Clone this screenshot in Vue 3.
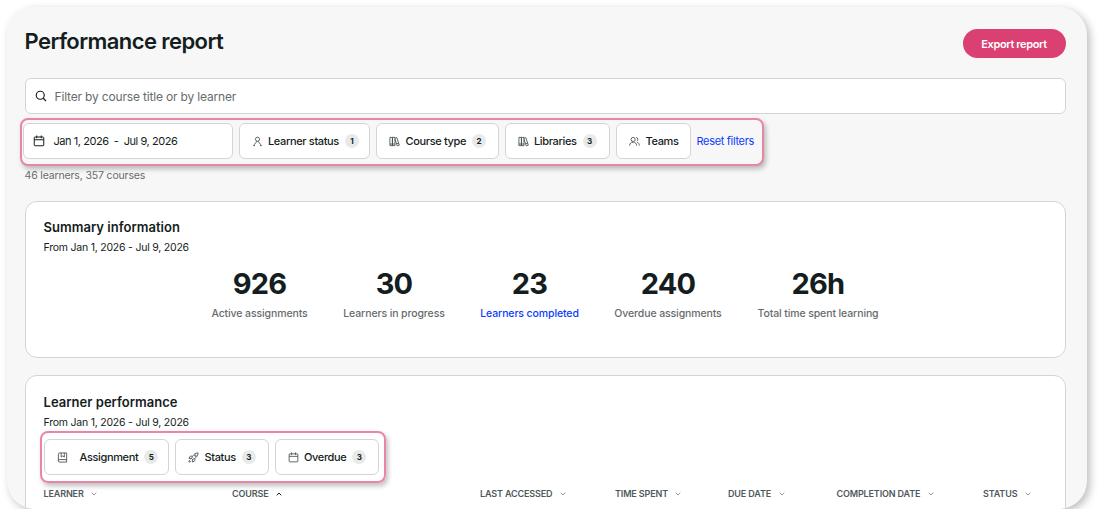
<script setup>
const filters = [
  { label: 'Learner status', icon: 'user', count: 1, w: 131.5 },
  { label: 'Course type', icon: 'books', count: 2, w: 122.5 },
  { label: 'Libraries', icon: 'books', count: 3, w: 105.5 },
  { label: 'Teams', icon: 'users', w: 74.5 },
]
const tableFilters = [
  { label: 'Assignment', icon: 'notebook', count: 5, w: 125.5, wide: true },
  { label: 'Status', icon: 'rocket', count: 3, w: 93.5 },
  { label: 'Overdue', icon: 'calendar', count: 3, w: 104 },
]
const stats = [
  { value: '926', label: 'Active assignments', w: 96 },
  { value: '30', label: 'Learners in progress', w: 101 },
  { value: '23', label: 'Learners completed', w: 98, active: true },
  { value: '240', label: 'Overdue assignments', w: 107 },
  { value: '26h', label: 'Total time spent learning', w: 121 },
]
const columns = ['LEARNER', 'COURSE', 'LAST ACCESSED', 'TIME SPENT', 'DUE DATE', 'COMPLETION DATE', 'STATUS']
const icons = {
  user: ['M12 2.500a4.500 4.500 0 1 0 0 9a4.500 4.500 0 0 0 0-9z', 'M5 21c0-3 1-5 3.500-6l2-3.500M19 21c0-3-1-5-3.500-6l-2-3.500', 'M2.500 21H6M18 21h3.500'],
  books: ['M2 3h5.500v18H2zM7.500 3H13v18H7.500z', 'M2 17.500h11', 'M13 5l4-1.500L22.500 20l-4.500 1.500L13 7', 'M16.500 17l4.500-1.500'],
  users: ['M9 3a4.500 4.500 0 1 0 0 9a4.500 4.500 0 0 0 0-9z', 'M1.500 21c0-5 3-7.500 7.500-7.500s7.500 2.500 7.500 7.500', 'M15.500 3.300a4.300 4.300 0 0 1 1.500 8.200M18 14c3 1 4.500 3.500 4.500 7'],
  notebook: ['M6 2h15v20H6a3 3 0 0 1-3-3V5a3 3 0 0 1 3-3z', 'M3 19a2.500 2.500 0 0 1 3-2.500h15', 'M9 2v9l3.500-2.500L16 11V2'],
  rocket: ['M8 14C10 7 15 2 22 2c0 7-5 12-12 14z', 'M9 9H5l-3 5 6 0M15 15v4l-5 3v-6', 'M5 17c-2 1-3 3-3 5 2 0 4-1 5-3', 'M16 6.500a1.500 1.500 0 1 0 0 3a1.500 1.500 0 0 0 0-3z'],
  calendar: ['M4 4h16a1.500 1.500 0 0 1 1.500 1.500V20a1.500 1.500 0 0 1-1.500 1.500H4A1.500 1.500 0 0 1 2.500 20V5.500A1.500 1.500 0 0 1 4 4z', 'M2.500 9.500h19M7.500 1v5.500M16.500 1v5.500'],
}
</script>

<template>
  <main class="panel">
    <header class="top">
      <h1>Performance report</h1>
      <button class="export"><span>Export report</span></button>
    </header>

    <div class="search">
      <svg class="search-icon" viewBox="0 0 24 24"><circle cx="10.500" cy="10.500" r="8" /><path d="M16.500 16.500L22 22" /></svg>
      <span class="placeholder">Filter by course title or by learner</span>
    </div>

    <div class="highlight main-filters">
      <button class="chip date">
        <svg class="cal" viewBox="0 0 24 24"><path v-for="d in icons.calendar" :key="d" :d="d" /></svg>
        <span class="range">Jan 1, 2026&nbsp; -&nbsp; Jul 9, 2026</span>
      </button>
      <button v-for="f in filters" :key="f.label" class="chip" :style="{ width: f.w + 'px' }">
        <svg class="icon" viewBox="0 0 24 24"><path v-for="d in icons[f.icon]" :key="d" :d="d" /></svg>
        <span class="name">{{ f.label }}</span>
        <span v-if="f.count" class="badge">{{ f.count }}</span>
      </button>
      <a class="reset">Reset filters</a>
    </div>

    <p class="count">46 learners, 357 courses</p>

    <section class="card summary">
      <h2>Summary information</h2>
      <p class="period">From Jan 1, 2026 - Jul 9, 2026</p>
      <div class="stats">
        <div v-for="s in stats" :key="s.label" class="stat" :class="{ active: s.active }" :style="{ width: s.w + 'px' }">
          <strong>{{ s.value }}</strong>
          <span>{{ s.label }}</span>
        </div>
      </div>
    </section>

    <section class="card learners">
      <h2>Learner performance</h2>
      <p class="period">From Jan 1, 2026 - Jul 9, 2026</p>
      <div class="highlight table-filters">
        <button v-for="f in tableFilters" :key="f.label" class="chip" :class="{ wide: f.wide }" :style="{ width: f.w + 'px' }">
          <svg class="icon" viewBox="0 0 24 24"><path v-for="d in icons[f.icon]" :key="d" :d="d" /></svg>
          <span class="name">{{ f.label }}</span>
          <span class="badge">{{ f.count }}</span>
        </button>
      </div>
      <div class="columns">
        <div v-for="c in columns" :key="c" class="column">
          <span>{{ c }}</span>
          <svg class="caret" :class="{ up: c === 'COURSE' }" viewBox="0 0 6 4"><path d="M0.700 0.700L3 3L5.300 0.700" /></svg>
        </div>
      </div>
    </section>
  </main>
</template>

<style>
body {
  background: #fff;
  overflow: hidden;
}
</style>

<style scoped>
* {
  box-sizing: border-box;
}
.panel {
  width: 1080px;
  height: 502px;
  margin: 7px 0 0 7px;
  padding: 0 21.500px 0 17.500px;
  border-radius: 28px;
  overflow: hidden;
  background: #f7f7f7;
  box-shadow: 3px 3px 9px rgba(0, 0, 0, 0.26);
  font-family: Inter, "Liberation Sans", sans-serif;
  color: #141d20;
  display: flex;
  flex-direction: column;
}
h1, h2, p {
  margin: 0;
  white-space: nowrap;
}
button {
  font: inherit;
  color: inherit;
  padding: 0;
  border: 0;
}
svg {
  fill: none;
  stroke: currentColor;
  flex: none;
}
.top {
  height: 71px;
  flex: none;
  display: flex;
  justify-content: space-between;
  align-items: flex-start;
}
h1 {
  margin-top: 20px;
  font-size: 22px;
  line-height: 28px;
  font-weight: 600;
  letter-spacing: -0.58px;
}
.export {
  margin-top: 22px;
  width: 103px;
  height: 29px;
  border-radius: 15px;
  background: #db4073;
  color: #fff;
  font-size: 11px;
  font-weight: 600;
  letter-spacing: -0.38px;
}
.search {
  height: 36px;
  flex: none;
  display: flex;
  align-items: center;
  gap: 8px;
  padding-left: 9px;
  border: 1px solid #d3d5d5;
  border-radius: 6px;
  background: #fff;
}
.search-icon {
  width: 12px;
  height: 12px;
  stroke-width: 2.3;
}
.placeholder {
  font-size: 12px;
  letter-spacing: -0.17px;
  color: #666c6e;
}
.highlight {
  display: flex;
  gap: 6px;
  border: 2px solid #e985a7;
  border-radius: 8px;
  box-shadow: 2px 3px 5px rgba(0, 0, 0, 0.25);
}
.main-filters {
  width: 744px;
  height: 48px;
  flex: none;
  margin: 4px 0 0 -5px;
  padding: 3px 0 0 1px;
  background: #f7f7f7;
}
.chip {
  height: 36px;
  flex: none;
  display: flex;
  align-items: center;
  padding-left: 12px;
  background: #fff;
  border: 1px solid #d3d5d5;
  border-radius: 6px;
  font-size: 11px;
  font-weight: 500;
  letter-spacing: -0.36px;
}
.date {
  width: 210px;
  padding-left: 9px;
  font-weight: 400;
  letter-spacing: -0.45px;
}
.cal {
  width: 12px;
  height: 12px;
  margin-right: 9px;
  stroke-width: 2;
}
.icon {
  width: 11px;
  height: 11px;
  margin-right: 5.500px;
  stroke-width: 1.8;
  color: #3f484b;
}
.wide .icon {
  margin-right: 12px;
}
.name {
  white-space: nowrap;
}
.badge {
  width: 14px;
  height: 14px;
  margin-left: 6px;
  border-radius: 7px;
  background: #e8eaea;
  font-size: 8px;
  font-weight: 700;
  line-height: 14px;
  text-align: center;
  letter-spacing: 0;
}
.reset {
  align-self: flex-start;
  line-height: 36px;
  color: #0a3cff;
  font-size: 11px;
  letter-spacing: -0.32px;
  white-space: nowrap;
}
.count {
  height: 35px;
  flex: none;
  padding-top: 2px;
  font-size: 10.500px;
  line-height: 15px;
  letter-spacing: -0.15px;
  color: #666c6e;
}
.card {
  flex: none;
  padding: 16px 0 0 18px;
  border: 1px solid #d3d5d5;
  border-radius: 12px;
  background: #fff;
}
.summary {
  height: 157px;
}
.learners {
  height: 180px;
  margin-top: 17px;
}
.learners h2 {
  margin-top: 1px;
}
h2 {
  font-size: 13px;
  line-height: 18px;
  font-weight: 600;
  letter-spacing: 0.03px;
}
.period {
  margin-top: 4px;
  font-size: 10.500px;
  line-height: 16px;
  letter-spacing: -0.22px;
}
.stats {
  display: flex;
  justify-content: center;
  gap: 36px;
  margin: 11px 18px 0 0;
}
.stat {
  display: flex;
  flex-direction: column;
  align-items: center;
  white-space: nowrap;
  font-size: 10.500px;
  line-height: 14px;
  font-weight: 500;
  letter-spacing: -0.11px;
  color: #666c6e;
}
.stat strong {
  height: 40px;
  font-size: 29px;
  line-height: 34px;
  font-weight: 700;
  letter-spacing: -0.8px;
  color: #141d20;
}
.stat.active span {
  color: #0a3cff;
}
.table-filters {
  width: 346px;
  height: 52px;
  margin: 0 0 0 -4px;
  padding: 6px 0 0 2px;
}
.columns {
  display: grid;
  grid-template-columns: 188.500px 248px 135px 113px 108.500px 146.500px 60px;
  margin-top: 4px;
}
.column {
  display: flex;
  align-items: center;
  gap: 7.500px;
  font-size: 9px;
  line-height: 14px;
  font-weight: 600;
  letter-spacing: -0.14px;
  color: #4f585b;
  white-space: nowrap;
}
.caret {
  width: 6px;
  height: 4px;
  color: #969c9e;
}
.caret.up {
  transform: rotate(180deg);
  color: #141d20;
}
</style>
